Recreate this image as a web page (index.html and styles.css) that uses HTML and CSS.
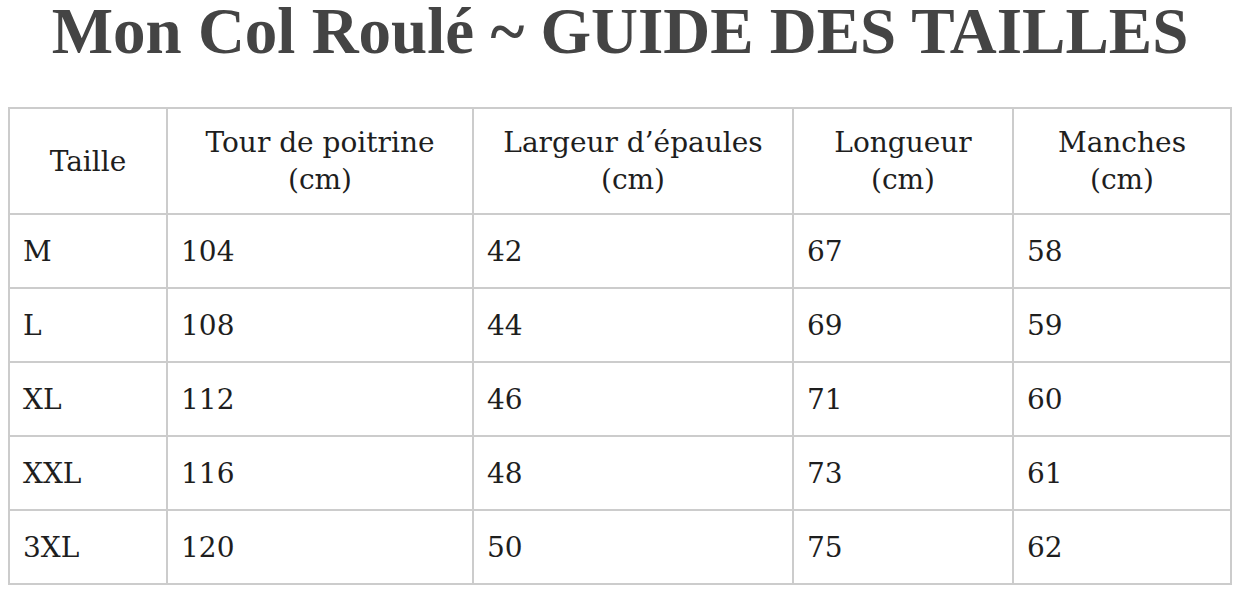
FILE: index.html
```html
<!DOCTYPE html>
<html lang="fr">
<head>
<meta charset="utf-8">
<title>Guide des tailles</title>
<link rel="stylesheet" href="styles.css">
</head>
<body>
<h1 class="title">Mon Col Roulé ~ GUIDE DES TAILLES</h1>
<table class="sizes">
  <thead>
    <tr>
      <th class="c1">Taille</th>
      <th class="c2">Tour de poitrine<br>(cm)</th>
      <th class="c3">Largeur d’épaules<br>(cm)</th>
      <th class="c4">Longueur<br>(cm)</th>
      <th class="c5">Manches<br>(cm)</th>
    </tr>
  </thead>
  <tbody>
    <tr><td>M</td><td>104</td><td>42</td><td>67</td><td>58</td></tr>
    <tr><td>L</td><td>108</td><td>44</td><td>69</td><td>59</td></tr>
    <tr><td>XL</td><td>112</td><td>46</td><td>71</td><td>60</td></tr>
    <tr><td>XXL</td><td>116</td><td>48</td><td>73</td><td>61</td></tr>
    <tr><td>3XL</td><td>120</td><td>50</td><td>75</td><td>62</td></tr>
  </tbody>
</table>
</body>
</html>
```
FILE: styles.css
```css
html, body {
  margin: 0;
  padding: 0;
  background: #ffffff;
}
body {
  padding: 0 6px 0 8px;
  font-family: "DejaVu Serif", "Liberation Serif", serif;
  color: #1e1e1e;
}
.title {
  margin: -5px 0 0 0;
  height: 112px;
  font-family: "Liberation Serif", "DejaVu Serif", serif;
  font-weight: bold;
  font-size: 65px;
  line-height: 72px;
  color: #444444;
  text-align: center;
}
.sizes {
  width: 100%;
  border-collapse: collapse;
  border: 2px solid #cccccc;
  font-size: 28px;
  table-layout: fixed;
}
.sizes th, .sizes td {
  border: 2px solid #cccccc;
  padding: 0 13px;
  text-align: left;
  font-weight: normal;
}
.sizes th {
  height: 104px;
  text-align: center;
  line-height: 37px;
}
.sizes td {
  height: 72px;
}
.c1 { width: 130px; }
.c2 { width: 278px; }
.c3 { width: 292px; }
.c4 { width: 192px; }
```
